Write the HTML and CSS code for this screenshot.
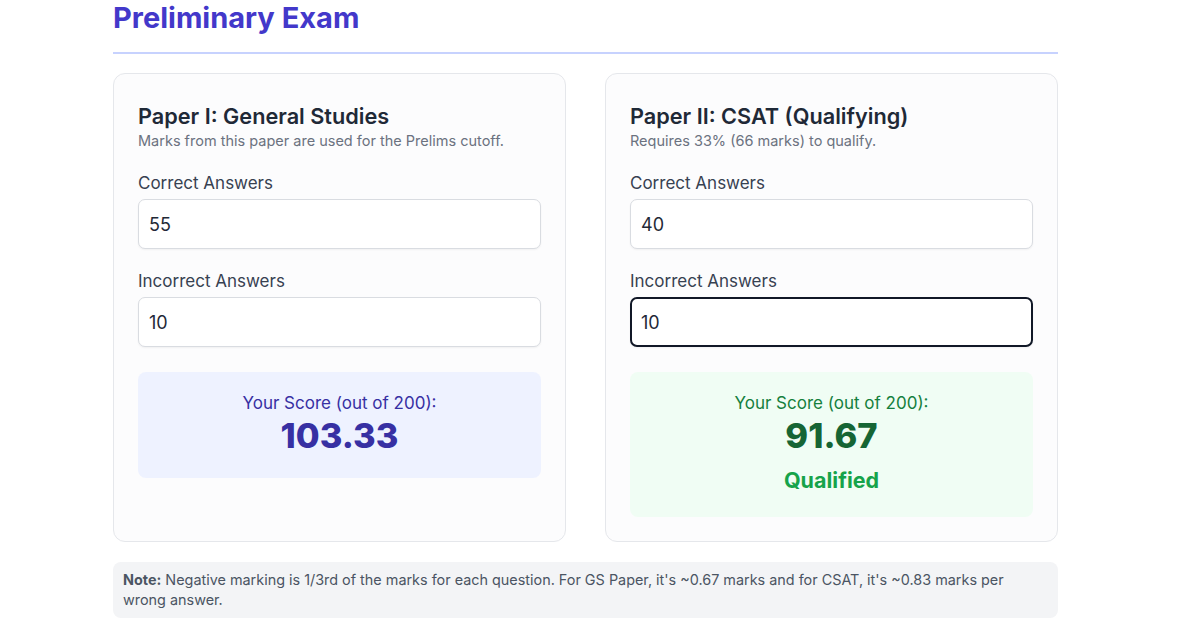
FILE: index.html
```html
<!DOCTYPE html>
<html lang="en">
<head>
<meta charset="utf-8">
<title>Preliminary Exam</title>
<link rel="stylesheet" href="styles.css">
</head>
<body>
<main class="page">
  <h1 class="title">Preliminary Exam</h1>
  <div class="cards">
    <section class="card">
      <h2 class="card-title">Paper I: General Studies</h2>
      <p class="card-sub">Marks from this paper are used for the Prelims cutoff.</p>
      <label class="field">
        <span class="label">Correct Answers</span>
        <input class="input" type="text" value="55">
      </label>
      <label class="field">
        <span class="label">Incorrect Answers</span>
        <input class="input" type="text" value="10">
      </label>
      <div class="score score-blue">
        <div class="score-label">Your Score (out of 200):</div>
        <div class="score-value">103.33</div>
      </div>
    </section>
    <section class="card">
      <h2 class="card-title">Paper II: CSAT (Qualifying)</h2>
      <p class="card-sub">Requires 33% (66 marks) to qualify.</p>
      <label class="field">
        <span class="label">Correct Answers</span>
        <input class="input" type="text" value="40">
      </label>
      <label class="field">
        <span class="label">Incorrect Answers</span>
        <input class="input input-focus" type="text" value="10">
      </label>
      <div class="score score-green">
        <div class="score-label">Your Score (out of 200):</div>
        <div class="score-value">91.67</div>
        <div class="score-status">Qualified</div>
      </div>
    </section>
  </div>
  <p class="note"><strong>Note:</strong> Negative marking is 1/3rd of the marks for each question. For GS Paper, it's ~0.67 marks and for CSAT, it's ~0.83 marks per wrong answer.</p>
</main>
</body>
</html>
```

FILE: styles.css
```css
* { box-sizing: border-box; }
html, body { margin: 0; padding: 0; background: #ffffff; }
body {
  font-family: Inter, "Noto Sans", "Liberation Sans", sans-serif;
  color: #1f2937;
}
.page {
  width: 945px;
  margin-left: 113px;
}
.title {
  margin: 0;
  font-size: 29px;
  line-height: 36px;
  font-weight: 700;
  color: #4338ca;
  padding-bottom: 16px;
  border-bottom: 2px solid #c7d2fe;
}
.cards {
  margin-top: 19px;
  display: grid;
  grid-template-columns: 1fr 1fr;
  gap: 39px;
}
.card {
  background: #fcfcfd;
  border: 1px solid #e5e7eb;
  border-radius: 12px;
  padding: 27px 24px 24px;
}
.card-title {
  margin: 0;
  font-size: 21.7px;
  line-height: 30px;
  font-weight: 600;
  color: #1f2937;
}
.card-sub {
  margin: 0;
  font-size: 14.5px;
  line-height: 20px;
  color: #6b7280;
}
.field {
  display: flex;
  flex-direction: column;
  margin-top: 20px;
}
.label {
  font-size: 17px;
  line-height: 24px;
  color: #374151;
  margin-bottom: 4px;
}
.input {
  font-family: inherit;
  font-size: 18px;
  line-height: 24px;
  color: #1f2937;
  height: 50px;
  padding: 12px 10px;
  border: 1px solid #d9dce1;
  border-radius: 7px;
  background: #ffffff;
  box-shadow: 0 1px 2px rgba(0,0,0,0.05);
  outline: none;
}
.input-focus {
  border: 2px solid #111827;
  padding: 11px 9px;
}
.score {
  margin-top: 25px;
  border-radius: 8px;
  padding: 19px 16px 21px;
  text-align: center;
}
.score-label {
  font-size: 17px;
  line-height: 24px;
}
.score-value {
  font-size: 34.5px;
  line-height: 42px;
  font-weight: 800;
}
.score-blue { background: #eef2ff; }
.score-blue .score-label { color: #3730a3; }
.score-blue .score-value { color: #3730a3; }
.score-green { background: #f0fdf4; padding-bottom: 23px; }
.score-green .score-label { color: #15803d; }
.score-green .score-value { color: #166534; }
.score-status {
  margin-top: 9px;
  font-size: 21.5px;
  line-height: 28px;
  font-weight: 700;
  color: #16a34a;
}
.note {
  margin: 20px 0 0;
  background: #f3f4f6;
  border-radius: 8px;
  padding: 8px 10px;
  font-size: 14.4px;
  line-height: 20px;
  color: #4b5563;
}
.note strong { font-weight: 700; color: #4b5563; }
```
